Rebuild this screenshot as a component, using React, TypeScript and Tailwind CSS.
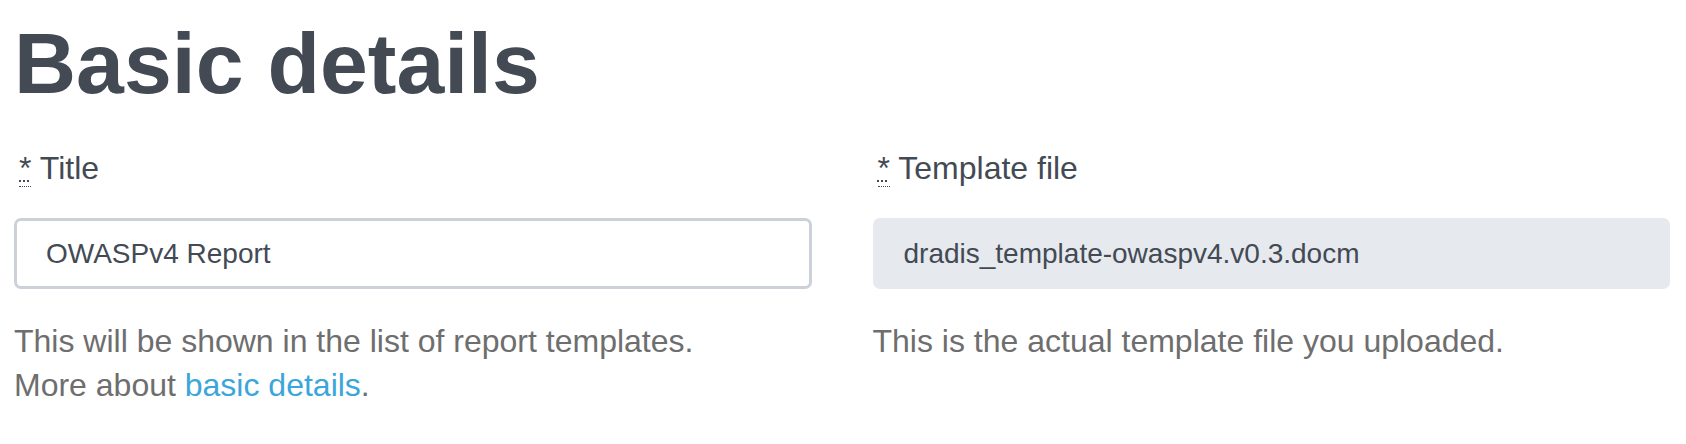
import React from "react";

export default function App() {
  return (
    <div
      className="min-h-[444px] bg-white pl-[14px] pr-[16px] pt-[15px] text-[#434a54]"
      style={{ fontFamily: '"Liberation Sans", Arial, Helvetica, sans-serif' }}
    >
      <h1 className="m-0 text-[86px] font-bold leading-[96px] text-[#434a54]">
        Basic details
      </h1>
      <div className="mt-[37px] grid grid-cols-2 gap-x-[61px]">
        <div>
          <label className="block pl-[5px] text-[32px] leading-[40px] text-[#434a54]">
            <abbr
              title="required"
              className="border-b border-dotted border-[#434a54] underline decoration-dotted decoration-2"
            >
              *
            </abbr>{" "}
            Title
          </label>
          <div className="mt-[30px] flex h-[71px] items-center rounded-[7px] border-[3px] border-[#ccd1d9] bg-white px-[29px] text-[28px] text-[#434a54]">
            OWASPv4 Report
          </div>
          <p className="mt-[30px] text-[32px] leading-[44px] text-[#6e6e6e]">
            This will be shown in the list of report templates.
            <br />
            More about{" "}
            <a href="#" className="text-[#3ba6d9]">
              basic details
            </a>
            .
          </p>
        </div>
        <div>
          <label className="block pl-[5px] text-[32px] leading-[40px] text-[#434a54]">
            <abbr
              title="required"
              className="border-b border-dotted border-[#434a54] underline decoration-dotted decoration-2"
            >
              *
            </abbr>{" "}
            Template file
          </label>
          <div className="mt-[30px] flex h-[71px] items-center rounded-[7px] bg-[#e6e9ed] px-[31px] text-[28px] text-[#434a54]">
            dradis_template-owaspv4.v0.3.docm
          </div>
          <p className="mt-[30px] text-[32px] leading-[44px] text-[#6e6e6e]">
            This is the actual template file you uploaded.
          </p>
        </div>
      </div>
    </div>
  );
}
